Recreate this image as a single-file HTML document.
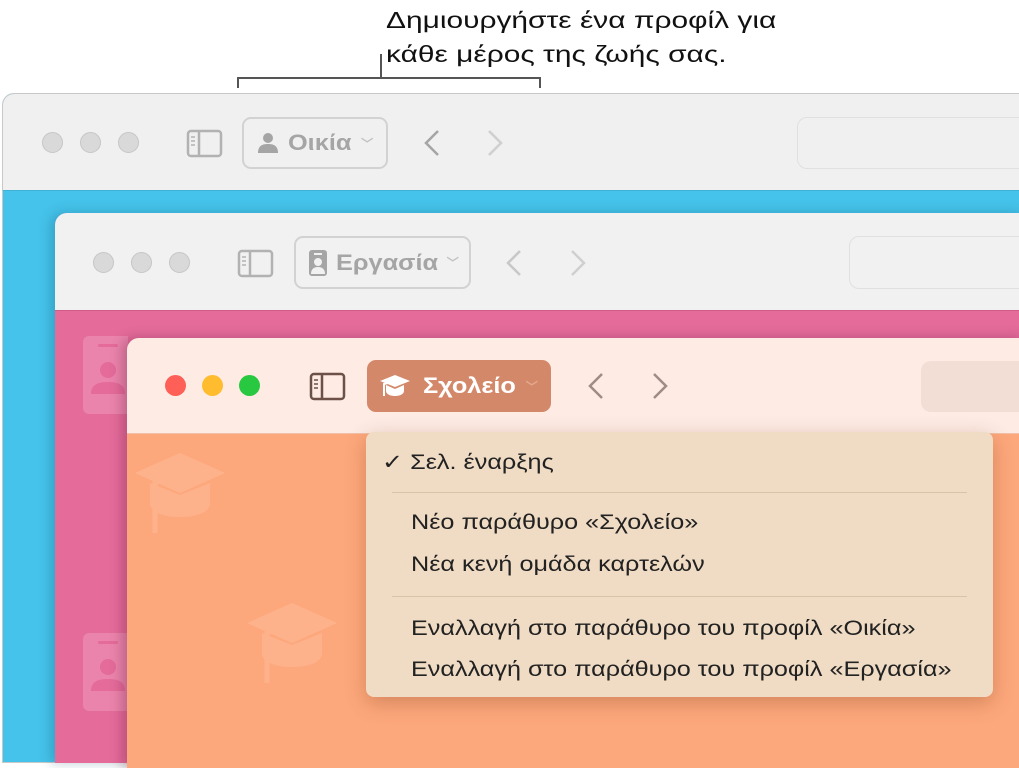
<!DOCTYPE html>
<html><head><meta charset="utf-8"><style>
*{margin:0;padding:0;box-sizing:border-box}
body{width:1019px;height:758px;background:#fff;position:relative;overflow:hidden;font-family:"Liberation Sans","DejaVu Sans",sans-serif}
.abs{position:absolute}
.win{position:absolute;border-radius:12px 0 0 0;overflow:hidden}
.tb{position:absolute;left:0;right:0;top:0}
.dot{position:absolute;width:21px;height:21px;border-radius:50%}
.btn{position:absolute;border-radius:9px;display:flex;align-items:center;font-weight:bold;font-size:22px}
.btn span.t{display:inline-block;transform:scaleX(1.15);transform-origin:left center}
.addr{position:absolute;border-radius:10px}
.menu{position:absolute;left:366px;top:432px;width:627px;height:265px;background:#f0dcc4;border-radius:8px;box-shadow:0 6px 20px rgba(120,60,20,.3);font-size:21px;color:#222}
.menu div.i{position:absolute;left:45px;white-space:nowrap;transform:scaleX(1.2);transform-origin:left center}
.sep{position:absolute;left:26px;right:26px;height:1px;background:#d8c3a8}
</style></head><body>
<div class="abs" style="left:386px;top:3px;font-size:23px;line-height:34px;color:#111;white-space:nowrap;transform:scaleX(1.3);transform-origin:left top">Δημιουργήστε ένα προφίλ για<br>κάθε μέρος της ζωής σας.</div>
<div class="abs" style="left:380px;top:54px;width:2px;height:24px;background:#555"></div>
<div class="abs" style="left:237px;top:77px;width:304px;height:2px;background:#555"></div>
<div class="abs" style="left:237px;top:77px;width:2px;height:11px;background:#555"></div>
<div class="abs" style="left:539px;top:77px;width:2px;height:11px;background:#555"></div>

<!-- Window 1 -->
<div class="win" style="left:2px;top:93px;width:1020px;height:670px;background:#45c3ea;border:1px solid #c8c8c8">
 <div class="tb" style="height:97px;background:#f0f0f0;border-bottom:1px solid #3fb0d6"></div>
 <div class="dot" style="left:39px;top:38px;background:#d9d9d9;border:1px solid #c6c6c6"></div>
 <div class="dot" style="left:77px;top:38px;background:#d9d9d9;border:1px solid #c6c6c6"></div>
 <div class="dot" style="left:115px;top:38px;background:#d9d9d9;border:1px solid #c6c6c6"></div>
 <svg class="abs" style="left:183px;top:34px" width="38" height="30"><rect x="2" y="3" width="33" height="25" rx="3" fill="none" stroke="#b2b2b2" stroke-width="2.5"/><line x1="13" y1="3" x2="13" y2="28" stroke="#b2b2b2" stroke-width="2.5"/><path d="M5 9h4M5 13h4M5 17h4" stroke="#b2b2b2" stroke-width="1.5"/></svg>
 <div class="btn" style="left:239px;top:23px;width:146px;height:52px;border:2px solid #d2d2d2;color:#a5a5a5"><svg style="margin-left:12px" width="24" height="24"><circle cx="12" cy="7" r="5" fill="#a5a5a5"/><path d="M2 22c0-7 4-9 10-9s10 2 10 9z" fill="#a5a5a5"/></svg><span class="t" style="margin-left:8px">Οικία</span><span style="margin-left:18px;font-size:12px;color:#c2c2c2">﹀</span></div>
 <svg class="abs" style="left:415px;top:33px" width="100" height="32"><path d="M20 4L8 16l12 12" fill="none" stroke="#a5a5a5" stroke-width="2.5"/><path d="M71 4l12 12-12 12" fill="none" stroke="#cfcfcf" stroke-width="2.5"/></svg>
 <div class="addr" style="left:794px;top:23px;width:300px;height:52px;border:1.5px solid #e0e0e0"></div>
</div>

<!-- Window 2 -->
<div class="win" style="left:55px;top:213px;width:970px;height:550px;background:#e46b9a;box-shadow:-4px 0 12px rgba(0,60,90,.25)">
 <div class="tb" style="height:98px;background:#f1f1f1;border-bottom:1px solid #cf5b86"></div>
 <div class="dot" style="left:38px;top:39px;background:#d9d9d9;border:1px solid #c6c6c6"></div>
 <div class="dot" style="left:76px;top:39px;background:#d9d9d9;border:1px solid #c6c6c6"></div>
 <div class="dot" style="left:114px;top:39px;background:#d9d9d9;border:1px solid #c6c6c6"></div>
 <svg class="abs" style="left:182px;top:35px" width="38" height="30"><rect x="2" y="3" width="33" height="25" rx="3" fill="none" stroke="#b2b2b2" stroke-width="2.5"/><line x1="13" y1="3" x2="13" y2="28" stroke="#b2b2b2" stroke-width="2.5"/><path d="M5 9h4M5 13h4M5 17h4" stroke="#b2b2b2" stroke-width="1.5"/></svg>
 <div class="btn" style="left:239px;top:23px;width:177px;height:53px;border:2px solid #d2d2d2;color:#a5a5a5"><svg style="margin-left:12px" width="20" height="26"><rect x="1" y="0" width="18" height="26" rx="3" fill="#a5a5a5"/><circle cx="10" cy="12" r="4" fill="#f1f1f1"/><path d="M3 24c0-5 3-7 7-7s7 2 7 7z" fill="#f1f1f1"/><rect x="6" y="3" width="8" height="2" fill="#f1f1f1"/></svg><span class="t" style="margin-left:8px">Εργασία</span><span style="margin-left:22px;font-size:12px;color:#c2c2c2">﹀</span></div>
 <svg class="abs" style="left:445px;top:34px" width="100" height="32"><path d="M20 4L8 16l12 12" fill="none" stroke="#c8c8c8" stroke-width="2.5"/><path d="M72 4l12 12-12 12" fill="none" stroke="#cfcfcf" stroke-width="2.5"/></svg>
 <div class="addr" style="left:794px;top:23px;width:300px;height:53px;border:1.5px solid #e0e0e0"></div>
 <svg class="abs" style="left:28px;top:123px" width="45" height="80"><rect x="0" y="0" width="50" height="78" rx="6" fill="#ec8fb3" opacity=".7"/><circle cx="25" cy="34" r="8" fill="#e46b9a"/><path d="M8 58c0-10 8-12 17-12s17 2 17 12z" fill="#e46b9a"/><rect x="15" y="8" width="20" height="3" rx="1.5" fill="#e46b9a"/></svg>
 <svg class="abs" style="left:28px;top:420px" width="45" height="80"><rect x="0" y="0" width="50" height="78" rx="6" fill="#ec8fb3" opacity=".7"/><circle cx="25" cy="34" r="8" fill="#e46b9a"/><path d="M8 58c0-10 8-12 17-12s17 2 17 12z" fill="#e46b9a"/><rect x="15" y="8" width="20" height="3" rx="1.5" fill="#e46b9a"/></svg>
</div>

<!-- Window 3 -->
<div class="win" style="left:127px;top:338px;width:900px;height:430px;background:#fda77c;box-shadow:-5px 0 12px rgba(90,20,50,.3)">
 <div class="tb" style="height:96px;background:#fdebe4;border-bottom:1px solid #f0c0a8"></div>
 <div class="dot" style="left:38px;top:37px;background:#fe5f57"></div>
 <div class="dot" style="left:75px;top:37px;background:#febc2e"></div>
 <div class="dot" style="left:112px;top:37px;background:#28c840"></div>
 <svg class="abs" style="left:182px;top:33px" width="38" height="30"><rect x="2" y="3" width="33" height="25" rx="3" fill="none" stroke="#6d5148" stroke-width="2.5"/><line x1="13" y1="3" x2="13" y2="28" stroke="#6d5148" stroke-width="2.5"/><path d="M5 9h4M5 13h4M5 17h4" stroke="#6d5148" stroke-width="1.5"/></svg>
 <div class="btn" style="left:240px;top:22px;width:184px;height:52px;background:#d4886a;color:#fff"><svg style="margin-left:12px" width="32" height="28"><path d="M16 3L1 9l15 6 15-6z" fill="#fff"/><path d="M7 13v6c0 3 4 5 9 5s9-2 9-5v-6l-9 4z" fill="#fff"/><path d="M16 9L5 12v12" stroke="#fff" stroke-width="2" fill="none"/></svg><span class="t" style="margin-left:12px">Σχολείο</span><span style="margin-left:22px;font-size:12px;color:#e5a88e">﹀</span></div>
 <svg class="abs" style="left:455px;top:32px" width="100" height="32"><path d="M20 4L8 16l12 12" fill="none" stroke="#a08c86" stroke-width="2.5"/><path d="M72 4l12 12-12 12" fill="none" stroke="#a08c86" stroke-width="2.5"/></svg>
 <div class="addr" style="left:794px;top:23px;width:300px;height:51px;background:#f3ded6"></div>
 <svg class="abs" style="left:8px;top:115px" width="100" height="90" opacity=".35"><path d="M45 0L0 20l45 20 45-20z" fill="#ffc9a8"/><path d="M15 30v20c0 10 15 14 30 14s30-4 30-14v-20l-30 12z" fill="#ffc9a8"/><path d="M45 20L20 30v50" stroke="#ffc9a8" stroke-width="5" fill="none"/></svg>
 <svg class="abs" style="left:120px;top:265px" width="100" height="90" opacity=".35"><path d="M45 0L0 20l45 20 45-20z" fill="#ffc9a8"/><path d="M15 30v20c0 10 15 14 30 14s30-4 30-14v-20l-30 12z" fill="#ffc9a8"/><path d="M45 20L20 30v50" stroke="#ffc9a8" stroke-width="5" fill="none"/></svg>
</div>

<div class="menu">
 <div class="i" style="left:16px;top:18px">✓ Σελ. έναρξης</div>
 <div class="sep" style="top:60px"></div>
 <div class="i" style="top:79px">Νέο παράθυρο «Σχολείο»</div>
 <div class="i" style="top:121px">Νέα κενή ομάδα καρτελών</div>
 <div class="sep" style="top:164px"></div>
 <div class="i" style="top:185px">Εναλλαγή στο παράθυρο του προφίλ «Οικία»</div>
 <div class="i" style="top:226px">Εναλλαγή στο παράθυρο του προφίλ «Εργασία»</div>
</div>
</body></html>
